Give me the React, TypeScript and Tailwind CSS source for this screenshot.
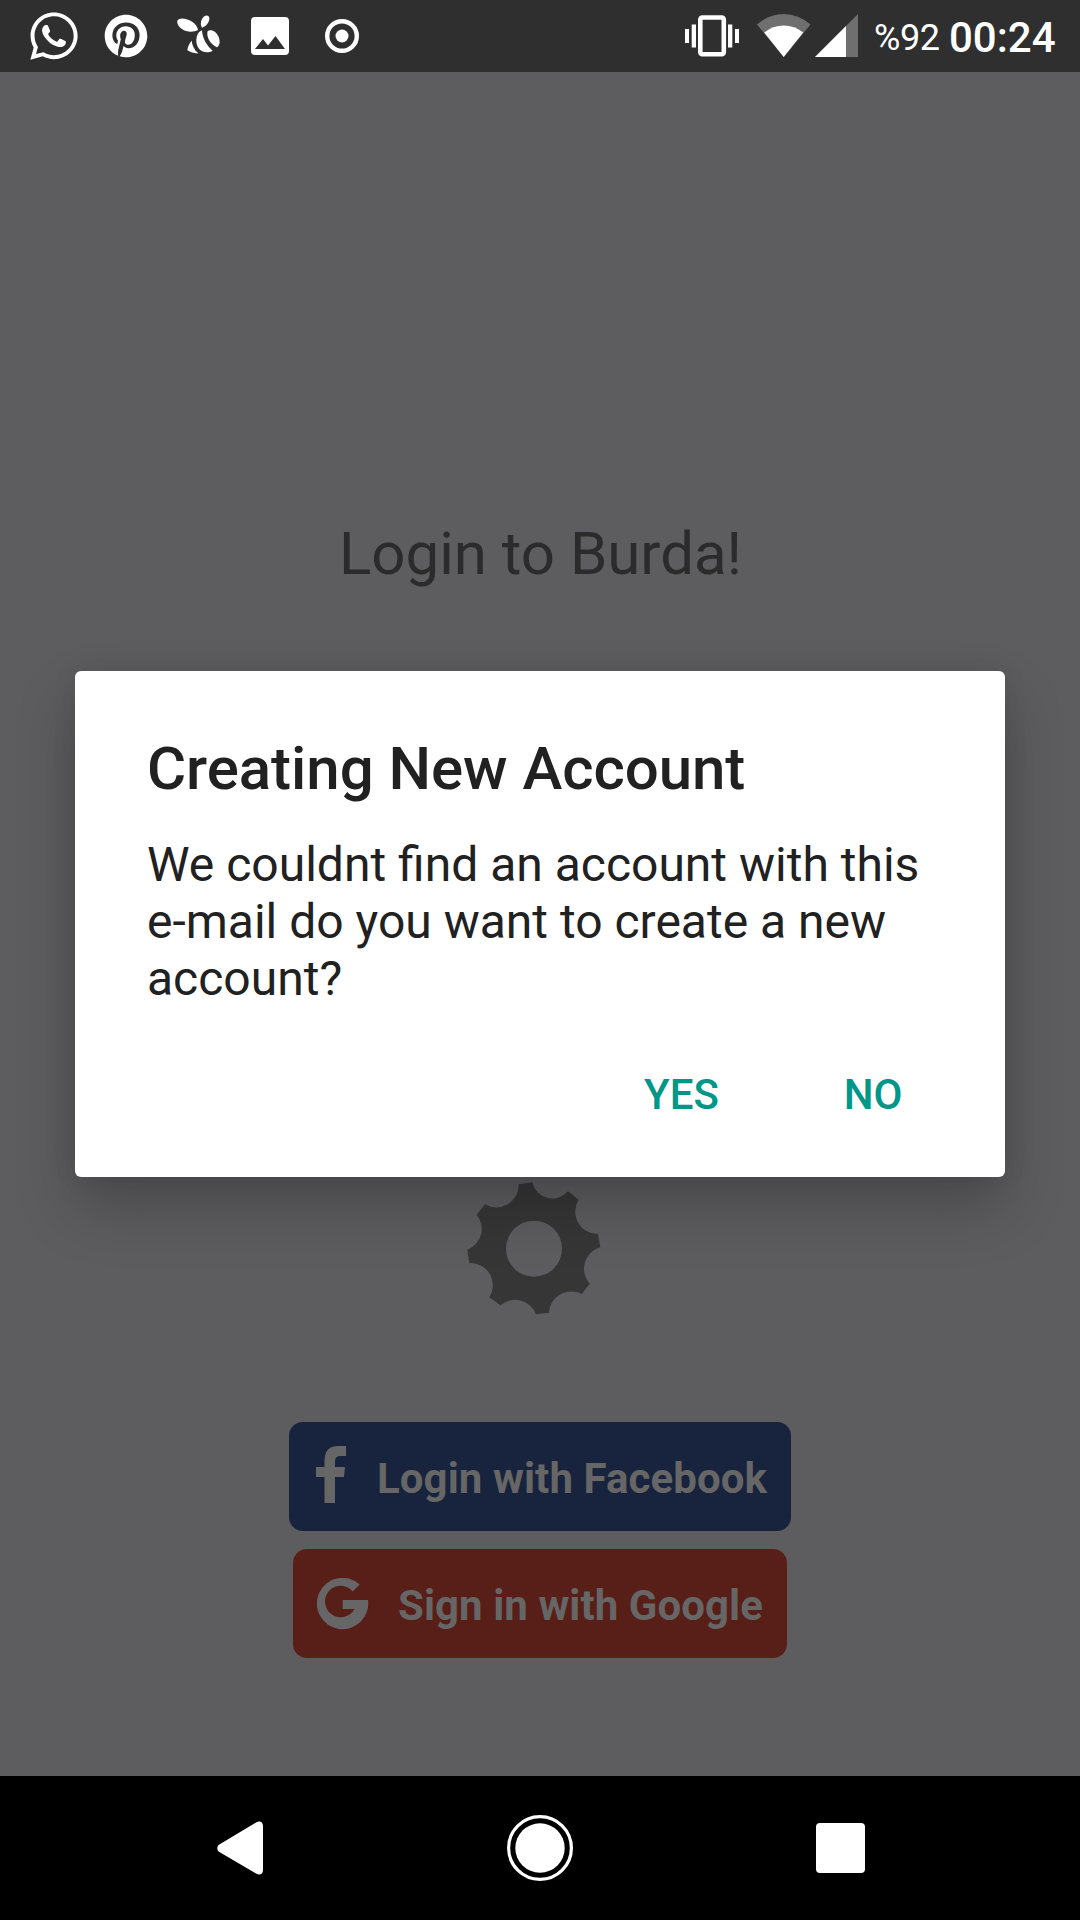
import React from "react";
import { FaWhatsapp, FaPinterest } from "react-icons/fa";

function Bee() {
  return (
    <svg width="44" height="40" viewBox="0 0 132 120" className="shrink-0" fill="#fff">
      <path d="M1 17C6 8 25 8 42 18C55 25 62 36 63 45C51 51 29 53 15 42C5 36 -1 26 1 17Z" />
      <path d="M75 38C68 28 72 12 82 4C89 -1 96 1 97 9C98 21 88 34 75 38Z" />
      <path d="M75 46C76 68 88 91 107 107C92 117 71 112 62 95C54 78 58 52 75 46Z" />
      <path d="M92 48C104 42 118 50 125 66C131 82 127 92 120 97C104 91 86 68 92 48Z" />
      <path d="M44 77C45 90 52 105 64 115C53 116 41 112 31 106C32 96 37 84 44 77Z" />
    </svg>
  );
}

function StatusBar() {
  return (
    <header className="flex h-[72px] shrink-0 items-start bg-[#2f2f2f] text-white">
      <FaWhatsapp className="mt-[9px] ml-[27px] size-[54px] shrink-0" />
      <FaPinterest className="mt-[14px] ml-[23px] size-[44px] shrink-0" />
      <div className="mt-[15px] ml-[29px]"><Bee /></div>
      <svg width="38" height="38" viewBox="0 0 38 38" className="mt-[17px] ml-[30px] shrink-0">
        <path fill="#fff" fillRule="evenodd" d="M4 0H34Q38 0 38 4V34Q38 38 34 38H4Q0 38 0 34V4Q0 0 4 0ZM4 32H34L24.500 19L17 28.500L12 22Z" />
      </svg>
      <svg width="34" height="34" viewBox="0 0 34 34" className="mt-[19px] ml-[36px] shrink-0">
        <circle cx="17" cy="17" r="14.800" fill="none" stroke="#fff" strokeWidth="4.400" />
        <circle cx="17" cy="17" r="6.500" fill="#fff" />
      </svg>
      <div className="grow" />
      <svg width="54" height="42" viewBox="0 0 54 42" className="mt-[15px] shrink-0" fill="#fff">
        <path d="M0 14h4v14H0zM6.700 9.500h4.300v23H6.700zM43 9.500h4.300v23H43zM50 14h4v14h-4z" />
        <rect x="15.300" y="2.500" width="23.500" height="36.800" rx="2" fill="none" stroke="#fff" strokeWidth="4.600" />
      </svg>
      <svg width="54" height="44" viewBox="0 0 54 44" className="mt-[13px] ml-[18px] shrink-0">
        <path d="M0 11.500Q12 1 26.700 1T53.500 11.500L26.700 44Z" fill="#6f6f6f" />
        <path d="M7.200 19.500Q16 12.600 26.700 12.600T46.200 19.500L26.700 44Z" fill="#fff" />
      </svg>
      <svg width="43" height="43" viewBox="0 0 43 43" className="mt-[14px] ml-[4px] shrink-0">
        <path d="M0 43L43 0V43Z" fill="#6f6f6f" />
        <path d="M0 43L31 12V43Z" fill="#fff" />
      </svg>
      <span className="mt-[17px] ml-[16px] w-[66px] text-[36px] leading-[42px] tracking-[-0.4px]">%92</span>
      <span className="mt-[13px] mr-[24px] ml-[9px] w-[107px] text-[42px] leading-[49px] font-medium">00:24</span>
    </header>
  );
}

function Gear() {
  return (
    <svg width="134" height="134" viewBox="81 96 402 402" fill="#363636">
      <path
        fillRule="evenodd"
        d="M236 103L277 97A62 62 0 0 0 384 124L416 149A67 67 0 0 0 474 252L481 292A67 67 0 0 0 449 401L425 432A67 67 0 0 0 327 488L288 493A67 67 0 0 0 181 466L148 442A67 67 0 0 0 88 339L82 299A67 67 0 0 0 110 194L135 163A67 67 0 0 0 236 103ZM282 212A84 84 0 1 0 282 380A84 84 0 1 0 282 212Z"
      />
    </svg>
  );
}

function Dialog() {
  return (
    <section
      role="dialog"
      className="absolute top-[599px] left-[75px] flex h-[506px] w-[930px] flex-col rounded-[6px] bg-white px-[72px] text-[#212121] shadow-[0_30px_60px_rgba(0,0,0,0.22),0_0_24px_rgba(0,0,0,0.08)]"
    >
      <h2 className="mt-[62px] text-[60px] leading-[72px] font-medium tracking-[-0.05px]">Creating New Account</h2>
      <p className="mt-[31px] text-[48px] leading-[57px] whitespace-nowrap">
        We couldnt find an account with this
        <br />
        e-mail do you want to create a new
        <br />
        account?
      </p>
      <div className="mt-[63px] flex text-[42px] leading-[50px] font-medium text-[#009688]">
        <button className="ml-[497px]">YES</button>
        <button className="ml-[125px]">NO</button>
      </div>
    </section>
  );
}

function NavBar() {
  return (
    <nav className="flex h-[144px] shrink-0 items-center bg-black">
      <svg width="48" height="54" viewBox="0 0 48 54" className="ml-[216px] shrink-0">
        <path d="M2.500 24L40 1.500C44 -1 47 1 47 5V49C47 53 44 55 40 52.500L2.500 30.500Q0 27 2.500 24Z" fill="#fff" />
      </svg>
      <svg width="66" height="66" viewBox="0 0 66 66" className="ml-[243px] shrink-0">
        <circle cx="33" cy="33" r="31.400" fill="none" stroke="#fff" strokeWidth="3.200" />
        <circle cx="33" cy="33" r="24.700" fill="#fff" />
      </svg>
      <div className="ml-[242.5px] size-[49.5px] rounded-[4px] bg-white" />
    </nav>
  );
}

export default function App() {
  return (
    <div className="flex h-[1920px] w-[1080px] flex-col overflow-hidden bg-[#5d5d5f] font-[Roboto,sans-serif]">
      <StatusBar />
      <main className="relative flex grow flex-col items-center">
        <h1 className="mt-[446px] ml-px text-[60px] leading-[72px] text-[#2b2b2b]">Login to Burda!</h1>
        <div className="mt-[592px] mr-[12px]"><Gear /></div>
        <button className="mt-[106px] flex h-[109px] w-[502px] shrink-0 items-center rounded-[14px] bg-[#18233d] text-[42px] font-bold text-[#666]">
          <svg width="30" height="57" viewBox="0 0 30 57" className="mb-[5px] ml-[27px] shrink-0" fill="currentColor">
            <path d="M8.500 57V31H0V21H8.500V15Q8.500 0 22 0H30V10H25Q19 10 19 15V21H29L28 31H19V57Z" />
          </svg>
          <span className="mt-[4px] ml-[31px] tracking-[0.08px] whitespace-nowrap">Login with Facebook</span>
        </button>
        <button className="mt-[18px] flex h-[109px] w-[494px] shrink-0 items-center rounded-[14px] bg-[#581e18] text-[42px] font-bold text-[#666]">
          <svg width="52" height="52" viewBox="0 0 52 52" className="ml-[24px] shrink-0" fill="currentColor">
            <path d="M42.700 6.400A25.700 25.700 0 1 0 51 22H25.700V31H37.500A15.700 15.700 0 1 1 35.700 13.400Z" />
          </svg>
          <span className="mt-[4px] ml-[29px] tracking-[0.05px] whitespace-nowrap">Sign in with Google</span>
        </button>
        <Dialog />
      </main>
      <NavBar />
    </div>
  );
}
